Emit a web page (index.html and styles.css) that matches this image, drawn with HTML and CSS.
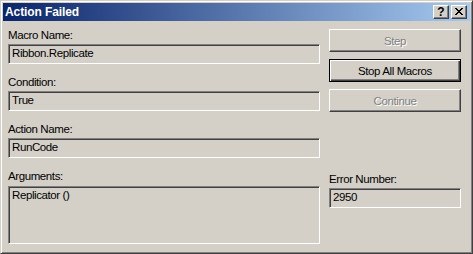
FILE: index.html
```html
<!DOCTYPE html>
<html lang="en">
<head>
    <meta charset="UTF-8">
    <title>Action Failed</title>
    <link rel="stylesheet" href="styles.css">
</head>
<body>
    <div class="window">
        <div class="title-bar">
            <span class="title-text">Action Failed</span>
            <div class="title-buttons">
                <span class="title-btn help-btn">?</span>
                <span class="title-btn close-btn">
                    <svg width="8" height="7" viewBox="0 0 8 7">
                        <path d="M0 0h2v1h-2zM6 0h2v1h-2zM1 1h2v1h-2zM5 1h2v1h-2zM2 2h4v1h-4zM3 3h2v1h-2zM2 4h4v1h-4zM1 5h2v1h-2zM5 5h2v1h-2zM0 6h2v1h-2zM6 6h2v1h-2z" fill="#000"/>
                    </svg>
                </span>
            </div>
        </div>

        <div class="content">
            <div class="field">
                <label class="field-label">Macro Name:</label>
                <div class="field-box">Ribbon.Replicate</div>
            </div>

            <div class="button-stack">
                <button class="dlg-btn" disabled>Step</button>
                <button class="dlg-btn default-btn">Stop All Macros</button>
                <button class="dlg-btn" disabled>Continue</button>
            </div>

            <div class="field">
                <label class="field-label">Condition:</label>
                <div class="field-box">True</div>
            </div>

            <div class="field">
                <label class="field-label">Action Name:</label>
                <div class="field-box">RunCode</div>
            </div>

            <div class="field">
                <label class="field-label">Arguments:</label>
                <div class="field-box args-box">Replicator ()</div>
            </div>

            <div class="field error-field">
                <label class="field-label">Error Number:</label>
                <div class="field-box">2950</div>
            </div>
        </div>
    </div>
</body>
</html>
```

FILE: styles.css
```css
* {
    margin: 0;
    padding: 0;
    box-sizing: border-box;
}

body {
    font-family: 'Liberation Sans', Arial, sans-serif;
    font-size: 11.5px;
    letter-spacing: -0.4px;
    color: #000;
    background: #d4d0c8;
}

.window {
    width: 473px;
    height: 254px;
    background: #d4d0c8;
    border: 1px solid;
    border-color: #d4d0c8 #404040 #404040 #d4d0c8;
    box-shadow: inset 1px 1px 0 #ffffff, inset -1px -1px 0 #808080;
    padding: 2px;
}

.title-bar {
    height: 18px;
    background: linear-gradient(90deg, #0a246a 0%, #a6caf0 100%);
    display: flex;
    align-items: center;
    justify-content: space-between;
    padding: 0 3px 0 2px;
}

.title-text {
    color: #fff;
    font-weight: 700;
    font-size: 12px;
    letter-spacing: -0.1px;
}

.title-buttons {
    display: flex;
    gap: 2px;
}

.title-btn {
    width: 16px;
    height: 14px;
    background: #d4d0c8;
    border: 1px solid;
    border-color: #ffffff #404040 #404040 #ffffff;
    box-shadow: inset -1px -1px 0 #808080;
    display: flex;
    align-items: center;
    justify-content: center;
}

.help-btn {
    font-weight: 700;
    font-size: 12px;
    line-height: 12px;
    letter-spacing: 0;
}

.close-btn svg {
    display: block;
    margin-top: -1px;
}

.content {
    display: grid;
    grid-template-columns: 312px 132px;
    column-gap: 9px;
    row-gap: 12px;
    padding: 8px 0 0 5px;
}

.field {
    display: flex;
    flex-direction: column;
    gap: 2px;
}

.field-label {
    line-height: 13px;
}

.field-box {
    height: 20px;
    line-height: 16px;
    background: #d4d0c8;
    border: 1px solid;
    border-color: #808080 #ffffff #ffffff #808080;
    box-shadow: inset 1px 1px 0 #404040, inset -1px -1px 0 #d4d0c8;
    padding: 0 2px 0 3px;
}

.args-box {
    height: 58px;
    margin-top: 1px;
}

.error-field {
    grid-column: 2;
    margin-top: 3px;
}

.button-stack {
    grid-column: 2;
    grid-row: 1 / span 3;
    display: flex;
    flex-direction: column;
    gap: 7px;
}

.dlg-btn {
    height: 23px;
    font-family: inherit;
    font-size: 11.5px;
    letter-spacing: -0.4px;
    color: #000;
    background: #d4d0c8;
    border: 1px solid;
    border-color: #ffffff #404040 #404040 #ffffff;
    box-shadow: inset -1px -1px 0 #808080;
}

.dlg-btn:disabled {
    color: #808080;
    text-shadow: 1px 1px 0 #ffffff;
}

.default-btn {
    border: 1px solid #000;
    box-shadow: inset 1px 1px 0 #ffffff, inset -1px -1px 0 #404040, inset -2px -2px 0 #808080;
}
```
